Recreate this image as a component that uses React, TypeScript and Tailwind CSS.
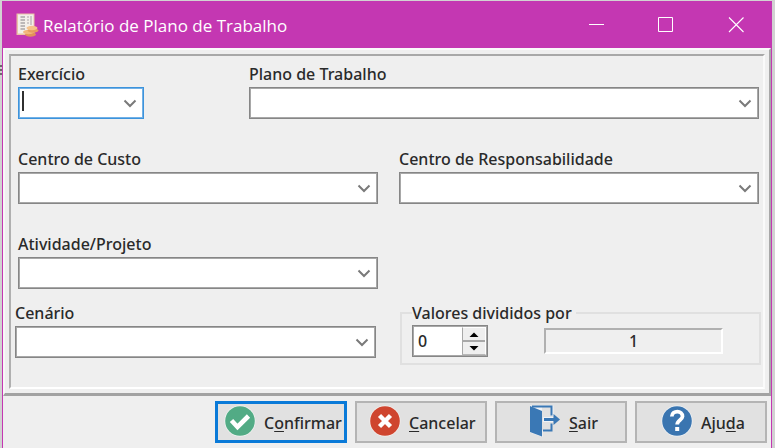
import type React from "react"

import { useState } from "react"

// Combo Box Component
const ComboBox = ({ id, label, active = false, className = "" }: { id: string; label: string; active?: boolean; className?: string }) => {
    return (
        <div className={`flex flex-col gap-px ${className}`}>
            <label htmlFor={id} className="leading-6">{label}</label>
            <div className="relative">
                <select
                    id={id}
                    className={`block h-8 w-full appearance-none border bg-white px-1 outline-none ring-1 ring-inset ${active ? "border-[#3c93dc] ring-[#72b1e6]" : "border-[#868686] ring-[#a8a8a8]"}`}
                >
                    <option value=""></option>
                </select>
                {active && <span className="absolute left-1 top-1 h-5 w-0.5 bg-[#303030]" />}
                <svg className="pointer-events-none absolute right-1.5 top-3 h-2.5 w-4" viewBox="0 0 16 10" fill="none">
                    <path d="M2.5 1.5 L8 7 L13.5 1.5" stroke="#7a7a7a" strokeWidth="2" />
                </svg>
            </div>
        </div>
    )
}

// Footer Button Component
const ActionButton = ({ children, className = "" }: { children: React.ReactNode; className?: string }) => {
    return (
        <button type="button" className={`flex h-[42px] w-[132px] items-center bg-[#e1e1e1] pb-0.5 ${className}`}>
            {children}
        </button>
    )
}

// Underlined shortcut letter
const Key = ({ children }: { children: React.ReactNode }) => (
    <span className="underline decoration-1 underline-offset-2">{children}</span>
)

// Icons
const ReportIcon = () => (
    <svg className="h-6 w-6" viewBox="0 0 24 24">
        <path d="M1.5 0.5 H19.5 V22 H1.5 Z" fill="#e9c3a6" />
        <path d="M3 1.5 H18.5 V20.5 H3 Z" fill="#f3efea" />
        <path d="M5.5 4 H10 M5.5 7 H10 M5.5 10 H10 M5.5 13 H10 M5.5 16 H10" stroke="#bcb8b8" strokeWidth="1.8" />
        <path d="M12 4 H14 M12 7 H14 M12 10 H14 M16 3 V12" stroke="#c5bfbf" strokeWidth="1.6" />
        <ellipse cx="15.5" cy="21.5" rx="5.5" ry="2.2" fill="#e2915a" />
        <ellipse cx="13.5" cy="19" rx="5.5" ry="2.2" fill="#f3b67c" />
        <ellipse cx="18" cy="17.5" rx="5.5" ry="2.2" fill="#e79c5f" />
        <ellipse cx="17" cy="15" rx="5.5" ry="2.2" fill="#f6c28a" />
    </svg>
)

const ConfirmIcon = () => (
    <svg className="h-8 w-8" viewBox="0 0 32 32">
        <circle cx="16" cy="16" r="15.5" fill="#f2f5f3" />
        <circle cx="16" cy="16" r="14.8" fill="#52ab85" />
        <path d="M7.5 15.5 L13.5 22 L24.5 11" stroke="#fff" strokeWidth="4.6" fill="none" />
    </svg>
)

const CancelIcon = () => (
    <svg className="h-8 w-8" viewBox="0 0 32 32">
        <circle cx="16" cy="16" r="15.5" fill="#f5efed" />
        <circle cx="16" cy="16" r="14.8" fill="#cf452f" />
        <path d="M10.5 10.5 L21.5 21.5 M21.5 10.5 L10.5 21.5" stroke="#fff" strokeWidth="4.4" />
    </svg>
)

const ExitIcon = () => (
    <svg className="h-8 w-8" viewBox="0 0 32 32">
        <path d="M1 0.5 H24.5 V11 H19 V26.5 H13.5 V32 L1 27.5 Z" fill="#f0f3f7" />
        <path d="M13 2 H22 V25.5 H13 Z" fill="#e1e1e1" />
        <path d="M3 1.5 H22.5 V10.5 M22.5 18.5 V25.5 H14" stroke="#3a78b5" strokeWidth="2" fill="none" />
        <path d="M1 1 L13 6 V31.5 L1 27 Z" fill="#3a78b5" />
        <path d="M14 14.5 H24" stroke="#f0f3f7" strokeWidth="5" />
        <path d="M15 14.5 H25" stroke="#3a78b5" strokeWidth="3" />
        <path d="M24.5 9 L31 14.5 L24.5 20 Z" fill="#3a78b5" />
    </svg>
)

const HelpIcon = () => (
    <svg className="h-8 w-8" viewBox="0 0 32 32">
        <circle cx="16" cy="16" r="15.5" fill="#eff3f7" />
        <circle cx="16" cy="16" r="14.8" fill="#3a75b0" />
        <path d="M10.8 11.5 C11 5 21.8 5 21.5 11.5 C21.3 15 16.2 15 16.2 19.5" stroke="#fff" strokeWidth="3.8" fill="none" />
        <rect x="14.2" y="22" width="4" height="4" fill="#fff" />
    </svg>
)

export default function App() {
    const [exponent, setExponent] = useState(0)

    return (
        <div className="flex min-h-screen bg-[#d2d2d2] pr-[3px] pt-px font-['Noto_Sans','Open_Sans',sans-serif] text-base font-medium text-[#2a2a2a]">
            {/* Sliver of the window behind */}
            <div className="w-0.5 pt-16">
                <svg className="h-2.5 w-0.5" viewBox="0 0 2 10">
                    <path d="M0 1 H2 M0 5 H2 M0 9 H2" stroke="#4a4a4a" strokeWidth="1.4" />
                </svg>
            </div>
            <div className="flex flex-1 flex-col border-x border-[#c437b2] bg-[#efefef]">
                {/* Title Bar */}
                <header className="flex h-[47px] items-center bg-[#c437b2] pl-3 text-white">
                    <ReportIcon />
                    <h1 className="flex-1 whitespace-nowrap pl-1 pt-0.5 font-['Open_Sans','Noto_Sans',sans-serif] text-[17px] font-normal">
                        Relatório de Plano de Trabalho
                    </h1>
                    <button type="button" aria-label="Minimizar" className="flex h-full w-[70px] items-center justify-center">
                        <svg className="h-4 w-4" viewBox="0 0 16 16">
                            <path d="M1 7.5 H16" stroke="currentColor" />
                        </svg>
                    </button>
                    <button type="button" aria-label="Maximizar" className="flex h-full w-[70px] items-center justify-center">
                        <svg className="h-4 w-4" viewBox="0 0 16 16">
                            <path d="M0.5 0.5 H14.5 V14.5 H0.5 Z" stroke="currentColor" fill="none" />
                        </svg>
                    </button>
                    <button type="button" aria-label="Fechar" className="flex h-full w-[70px] items-center justify-center">
                        <svg className="h-4 w-4" viewBox="0 0 16 16">
                            <path d="M1 0.5 L15.5 15 M15.5 0.5 L1 15" stroke="currentColor" strokeWidth="1.1" />
                        </svg>
                    </button>
                </header>

                {/* Form */}
                <main className="border-b-[3px] border-l-2 border-r-2 border-t-2 border-b-[#a2a2a2] border-l-[#f8f8f8] border-r-[#a8a8a8] border-t-[#fafafa] p-1">
                    <div className="border-2 border-b-white border-l-[#b0b0b0] border-r-[#fafafa] border-t-[#a8a8a8] pb-[22px] pt-1.5">
                        <div className="flex gap-[105px] pl-[7px] pr-1">
                            <ComboBox id="exercicio" label="Exercício" active className="w-[126px]" />
                            <ComboBox id="plano" label="Plano de Trabalho" className="flex-1" />
                        </div>
                        <div className="mt-7 grid grid-cols-2 gap-[21px] pl-[7px] pr-1">
                            <ComboBox id="custo" label="Centro de Custo" />
                            <ComboBox id="responsabilidade" label="Centro de Responsabilidade" />
                        </div>
                        <div className="mt-7 grid grid-cols-2 gap-[21px] pl-[7px] pr-1">
                            <ComboBox id="atividade" label="Atividade/Projeto" />
                        </div>
                        <div className="mt-3 grid grid-cols-2 items-start gap-6 pl-1 pr-0.5">
                            <ComboBox id="cenario" label="Cenário" />
                            <fieldset className="border-2 border-[#e0e0e0] pb-1.5 pl-2.5 pr-9">
                                <legend className="pr-1 leading-6">Valores divididos por</legend>
                                <div className="flex items-center gap-14">
                                    <div className="flex h-8 w-[76px] border border-[#868686] bg-white p-px ring-1 ring-inset ring-[#a8a8a8]">
                                        <input
                                            type="text"
                                            inputMode="numeric"
                                            aria-label="Casas"
                                            value={exponent}
                                            onChange={(e) => setExponent(Number(e.target.value) || 0)}
                                            className="w-12 min-w-0 flex-1 pl-1 leading-6 outline-none"
                                        />
                                        <div className="flex w-6 flex-col border border-b-[#b8b8b8] border-l-[#a8a8a8] border-r-white border-t-white bg-[#a8a8a8]">
                                            <button
                                                type="button"
                                                aria-label="Aumentar"
                                                onClick={() => setExponent(exponent + 1)}
                                                className="flex flex-1 items-center justify-center bg-[#efefef]"
                                            >
                                                <svg className="h-[5px] w-2.5" viewBox="0 0 10 5">
                                                    <path d="M0.5 5 L5 0.5 L9.5 5 Z" fill="#000" />
                                                </svg>
                                            </button>
                                            <button
                                                type="button"
                                                aria-label="Diminuir"
                                                onClick={() => setExponent(Math.max(0, exponent - 1))}
                                                className="mt-0.5 flex flex-1 items-center justify-center bg-[#efefef]"
                                            >
                                                <svg className="h-[5px] w-2.5" viewBox="0 0 10 5">
                                                    <path d="M0.5 0 L5 4.5 L9.5 0 Z" fill="#000" />
                                                </svg>
                                            </button>
                                        </div>
                                    </div>
                                    <output className="flex h-[26px] flex-1 items-center justify-center border-2 border-b-white border-l-[#b0b0b0] border-r-white border-t-[#b0b0b0]">
                                        {10 ** exponent}
                                    </output>
                                </div>
                            </fieldset>
                        </div>
                    </div>
                </main>

                {/* Footer Buttons */}
                <footer className="flex justify-end gap-2 pb-1 pr-1 pt-[5px]">
                    <ActionButton className="gap-2 border-[3px] border-[#0a7ad8] pl-1.5">
                        <ConfirmIcon />
                        <span className="pt-1">C<Key>o</Key>nfirmar</span>
                    </ActionButton>
                    <ActionButton className="gap-2 border-2 border-[#b4b4b4] pl-3">
                        <CancelIcon />
                        <span className="pt-1"><Key>C</Key>ancelar</span>
                    </ActionButton>
                    <ActionButton className="gap-2 border-2 border-[#b4b4b4] pl-8">
                        <ExitIcon />
                        <span className="pt-1"><Key>S</Key>air</span>
                    </ActionButton>
                    <ActionButton className="gap-2 border-2 border-[#b4b4b4] pl-6">
                        <HelpIcon />
                        <span className="pt-1">Aju<Key>d</Key>a</span>
                    </ActionButton>
                </footer>
            </div>
        </div>
    )
}
